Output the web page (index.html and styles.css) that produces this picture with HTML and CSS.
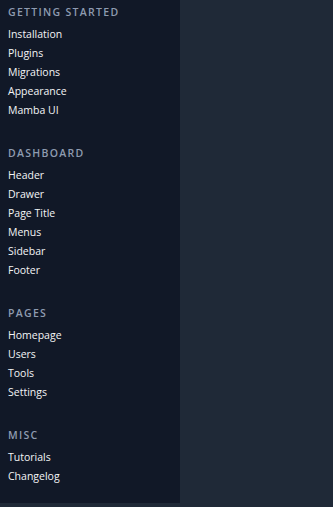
FILE: index.html
```html
<!DOCTYPE html>
<html lang="en">
<head>
<meta charset="utf-8">
<title>Docs</title>
<link rel="stylesheet" href="styles.css">
</head>
<body>
<div class="layout">
  <nav class="sidebar">
    <section class="group">
      <h3 class="group-title">Getting Started</h3>
      <ul class="links">
        <li><a href="#">Installation</a></li>
        <li><a href="#">Plugins</a></li>
        <li><a href="#">Migrations</a></li>
        <li><a href="#">Appearance</a></li>
        <li><a href="#">Mamba UI</a></li>
      </ul>
    </section>
    <section class="group">
      <h3 class="group-title">Dashboard</h3>
      <ul class="links">
        <li><a href="#">Header</a></li>
        <li><a href="#">Drawer</a></li>
        <li><a href="#">Page Title</a></li>
        <li><a href="#">Menus</a></li>
        <li><a href="#">Sidebar</a></li>
        <li><a href="#">Footer</a></li>
      </ul>
    </section>
    <section class="group">
      <h3 class="group-title">Pages</h3>
      <ul class="links">
        <li><a href="#">Homepage</a></li>
        <li><a href="#">Users</a></li>
        <li><a href="#">Tools</a></li>
        <li><a href="#">Settings</a></li>
      </ul>
    </section>
    <section class="group">
      <h3 class="group-title">Misc</h3>
      <ul class="links">
        <li><a href="#">Tutorials</a></li>
        <li><a href="#">Changelog</a></li>
      </ul>
    </section>
  </nav>
  <main class="content"></main>
</div>
</body>
</html>
```
FILE: styles.css
```css
html, body {
  margin: 0;
  padding: 0;
  background: #1f2937;
  height: 100%;
}
body {
  font-family: "Open Sans", "Noto Sans", sans-serif;
}
.layout {
  display: flex;
  align-items: flex-start;
}
.sidebar {
  width: 180px;
  height: 503px;
  box-sizing: border-box;
  background: #111827;
  padding: 5px 8px 0;
  display: flex;
  flex-direction: column;
  gap: 28px;
}
.group-title {
  margin: 0;
  font-size: 10.5px;
  font-weight: 600;
  letter-spacing: 1.3px;
  text-transform: uppercase;
  color: #8e9bb0;
  line-height: 14px;
}
.links {
  list-style: none;
  margin: 4px 0 0;
  padding: 0;
}
.links li {
  line-height: 19px;
  height: 19px;
}
.links a {
  color: #f3f4f6;
  text-decoration: none;
  font-size: 10.5px;
}
.content {
  flex: 1;
}
```
